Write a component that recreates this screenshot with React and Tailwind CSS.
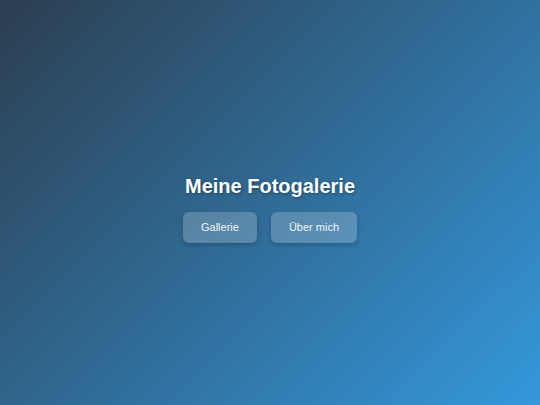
import React from 'react';

const links = ['Gallerie', 'Über mich'];

export default function App() {
  return (
    <div className="min-h-screen w-full flex flex-col items-center justify-center pt-[12px] bg-[linear-gradient(135deg,#2c3e50,#3498db)] font-['Liberation_Sans',Arial,sans-serif] text-white">
      <h1 className="text-[20px] font-bold leading-[23px] [text-shadow:1px_1px_3px_rgba(0,0,0,0.35)]">
        Meine Fotogalerie
      </h1>
      <nav className="mt-[14px] flex gap-[14px]">
        {links.map((label) => (
          <a
            key={label}
            href="#"
            className="px-[18px] py-[9px] text-[11px] leading-[13px] rounded-[6px] bg-white/20 text-white/95 shadow-[0_2px_5px_rgba(0,0,0,0.2)]"
          >
            {label}
          </a>
        ))}
      </nav>
    </div>
  );
}
